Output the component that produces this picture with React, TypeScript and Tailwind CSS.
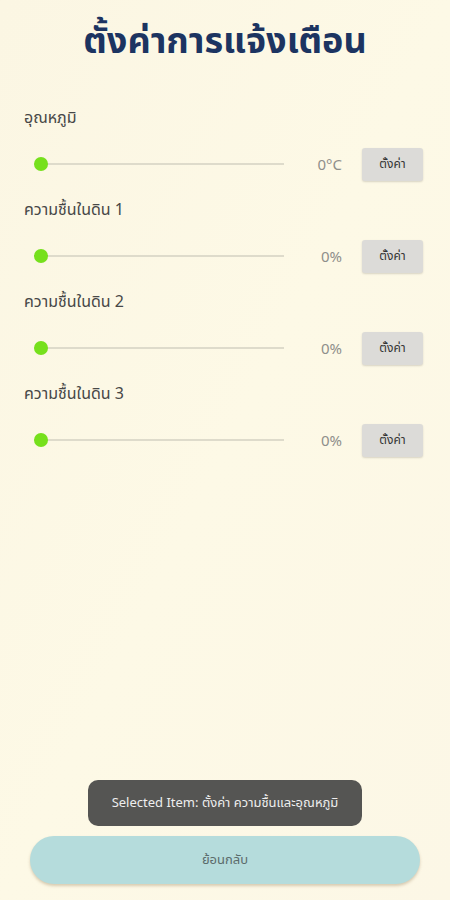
const items = [
  { label: 'อุณหภูมิ', value: '0°C' },
  { label: 'ความชื้นในดิน 1', value: '0%' },
  { label: 'ความชื้นในดิน 2', value: '0%' },
  { label: 'ความชื้นในดิน 3', value: '0%' },
];

function SliderRow({ value }: { value: string }) {
  return (
    <div className="flex items-center h-[34px]">
      {/* track + thumb */}
      <div className="relative ml-[34px] w-[250px] h-[14px] flex items-center">
        <div className="w-full h-[2px] bg-[#dedbcb]" />
        <div className="absolute left-0 top-0 w-[14px] h-[14px] rounded-full bg-[#76e01c]" />
      </div>
      <span className="w-[78px] pr-[20px] text-right text-[15px] text-[#8f8f8b]">{value}</span>
      <button className="w-[61px] h-[33px] rounded-[3px] bg-[#dcdbd8] text-[12px] text-[#333] shadow-[0_1px_2px_rgba(0,0,0,0.15)]">
        ตั้งค่า
      </button>
    </div>
  );
}

export default function App() {
  return (
    <main
      className="w-[450px] h-[900px] flex flex-col bg-gradient-to-br from-[#fbf6e3] via-[#fdf9e6] to-[#fcf7e6] font-['Noto_Sans','Noto_Sans_Thai','DejaVu_Sans',sans-serif]"
    >
      <h1 className="pt-[16px] text-center text-[36px] font-bold leading-[48px] text-[#1c3461]">
        ตั้งค่าการแจ้งเตือน
      </h1>

      <div className="mt-[36px] flex flex-col">
        {items.map((item) => (
          <div key={item.label} className="flex flex-col h-[92px]">
            <div className="pl-[24px] h-[34px] flex items-center text-[16px] text-[#474747]">{item.label}</div>
            <div className="mt-[13px]">
              <SliderRow value={item.value} />
            </div>
          </div>
        ))}
      </div>

      <div className="flex-1" />

      {/* toast */}
      <div className="flex justify-center">
        <div className="w-[274px] h-[46px] rounded-[10px] bg-[#555553] flex items-center justify-center text-[13px] text-[#eeeeee]">
          Selected Item: ตั้งค่า ความชื้นและอุณหภูมิ
        </div>
      </div>

      <div className="px-[30px] mt-[10px] mb-[16px]">
        <button className="w-full h-[48px] rounded-full bg-[#b5dcdc] text-[13px] text-[#5b6b6b] shadow-[0_2px_3px_rgba(150,120,80,0.35)]">
          ย้อนกลับ
        </button>
      </div>
    </main>
  );
}
